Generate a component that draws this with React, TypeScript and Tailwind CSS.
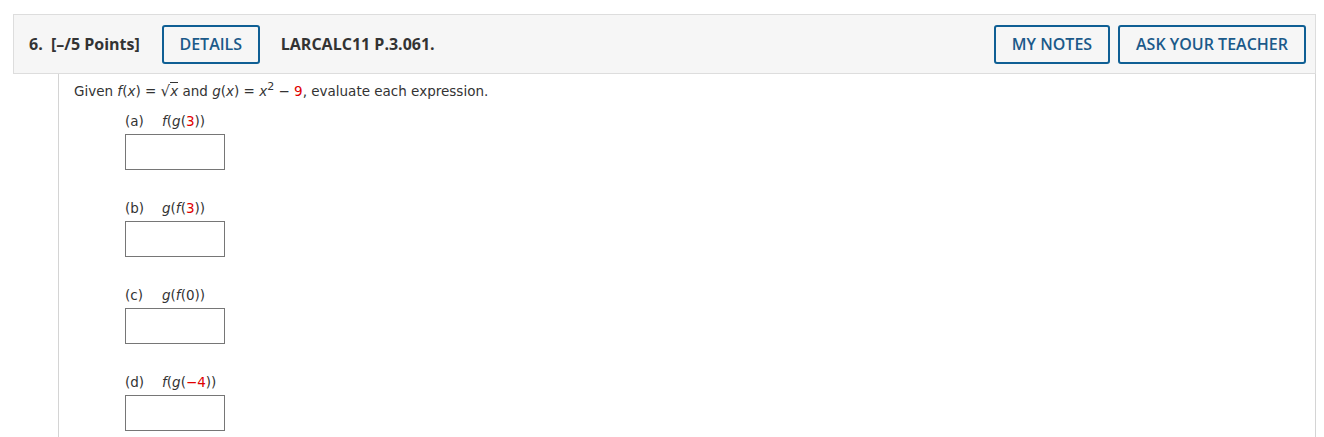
import React from "react";

const blue = "border-[#0f5f94] text-[#1b5a8a]";

function Item({ label, children }: { label: string; children: React.ReactNode }) {
  return (
    <div className="flex flex-col">
      <div className="flex items-center h-[18px] text-[13.5px] text-[#333]">
        <span className="w-[37px]">{label}</span>
        <span>{children}</span>
      </div>
      <div className="mt-[4px] w-[100px] h-[36px] border border-[#767676] bg-white" />
    </div>
  );
}

const Red = ({ children }: { children: React.ReactNode }) => (
  <span className="text-[#e00000]">{children}</span>
);

export default function App() {
  return (
    <div className="w-[1324px] h-[437px] bg-white overflow-hidden pt-[14px] pl-[13px]">
      <div className="w-[1303px] h-[60px] bg-[#f6f6f6] border border-[#dddddd] flex items-center pl-[15px] pr-[9px] font-['Open_Sans',sans-serif] text-[#333]">
        <span className="font-bold text-[16px]">6.&nbsp; [–/5 Points]</span>
        <button className={`ml-[22px] h-[39px] w-[98px] border-2 rounded-[3px] ${blue} text-[16px] font-semibold`}>
          DETAILS
        </button>
        <span className="ml-[21px] font-bold text-[16px] text-[#333]">LARCALC11 P.3.061.</span>
        <div className="flex-1" />
        <button className={`h-[39px] w-[116px] border-2 rounded-[3px] ${blue} text-[16px] font-semibold`}>
          MY NOTES
        </button>
        <button className={`ml-[8px] h-[39px] w-[188px] border-2 rounded-[3px] ${blue} text-[16px] font-semibold`}>
          ASK YOUR TEACHER
        </button>
      </div>
      <div className="ml-[45px] w-[1258px] h-[380px] border-l border-r border-[#d4d4d4] pl-[15px] pt-[8px] font-['DejaVu_Sans',Verdana,sans-serif] text-[13.5px] text-[#333]">
        <div className="h-[18px] flex items-center">
          <span>
            Given <i>f</i>(<i>x</i>) = <span className="inline-block"><span className="text-[15px]">√</span><span className="border-t border-[#333] italic">x</span></span> and <i>g</i>(<i>x</i>) = <i>x</i><sup className="text-[11px]">2</sup> − <Red>9</Red>, evaluate each expression.
          </span>
        </div>
        <div className="ml-[51px] mt-[12px] flex flex-col gap-[29px]">
          <Item label="(a)">
            <i>f</i>(<i>g</i>(<Red>3</Red>))
          </Item>
          <Item label="(b)">
            <i>g</i>(<i>f</i>(<Red>3</Red>))
          </Item>
          <Item label="(c)">
            <i>g</i>(<i>f</i>(0))
          </Item>
          <Item label="(d)">
            <i>f</i>(<i>g</i>(<Red>−4</Red>))
          </Item>
        </div>
      </div>
    </div>
  );
}
